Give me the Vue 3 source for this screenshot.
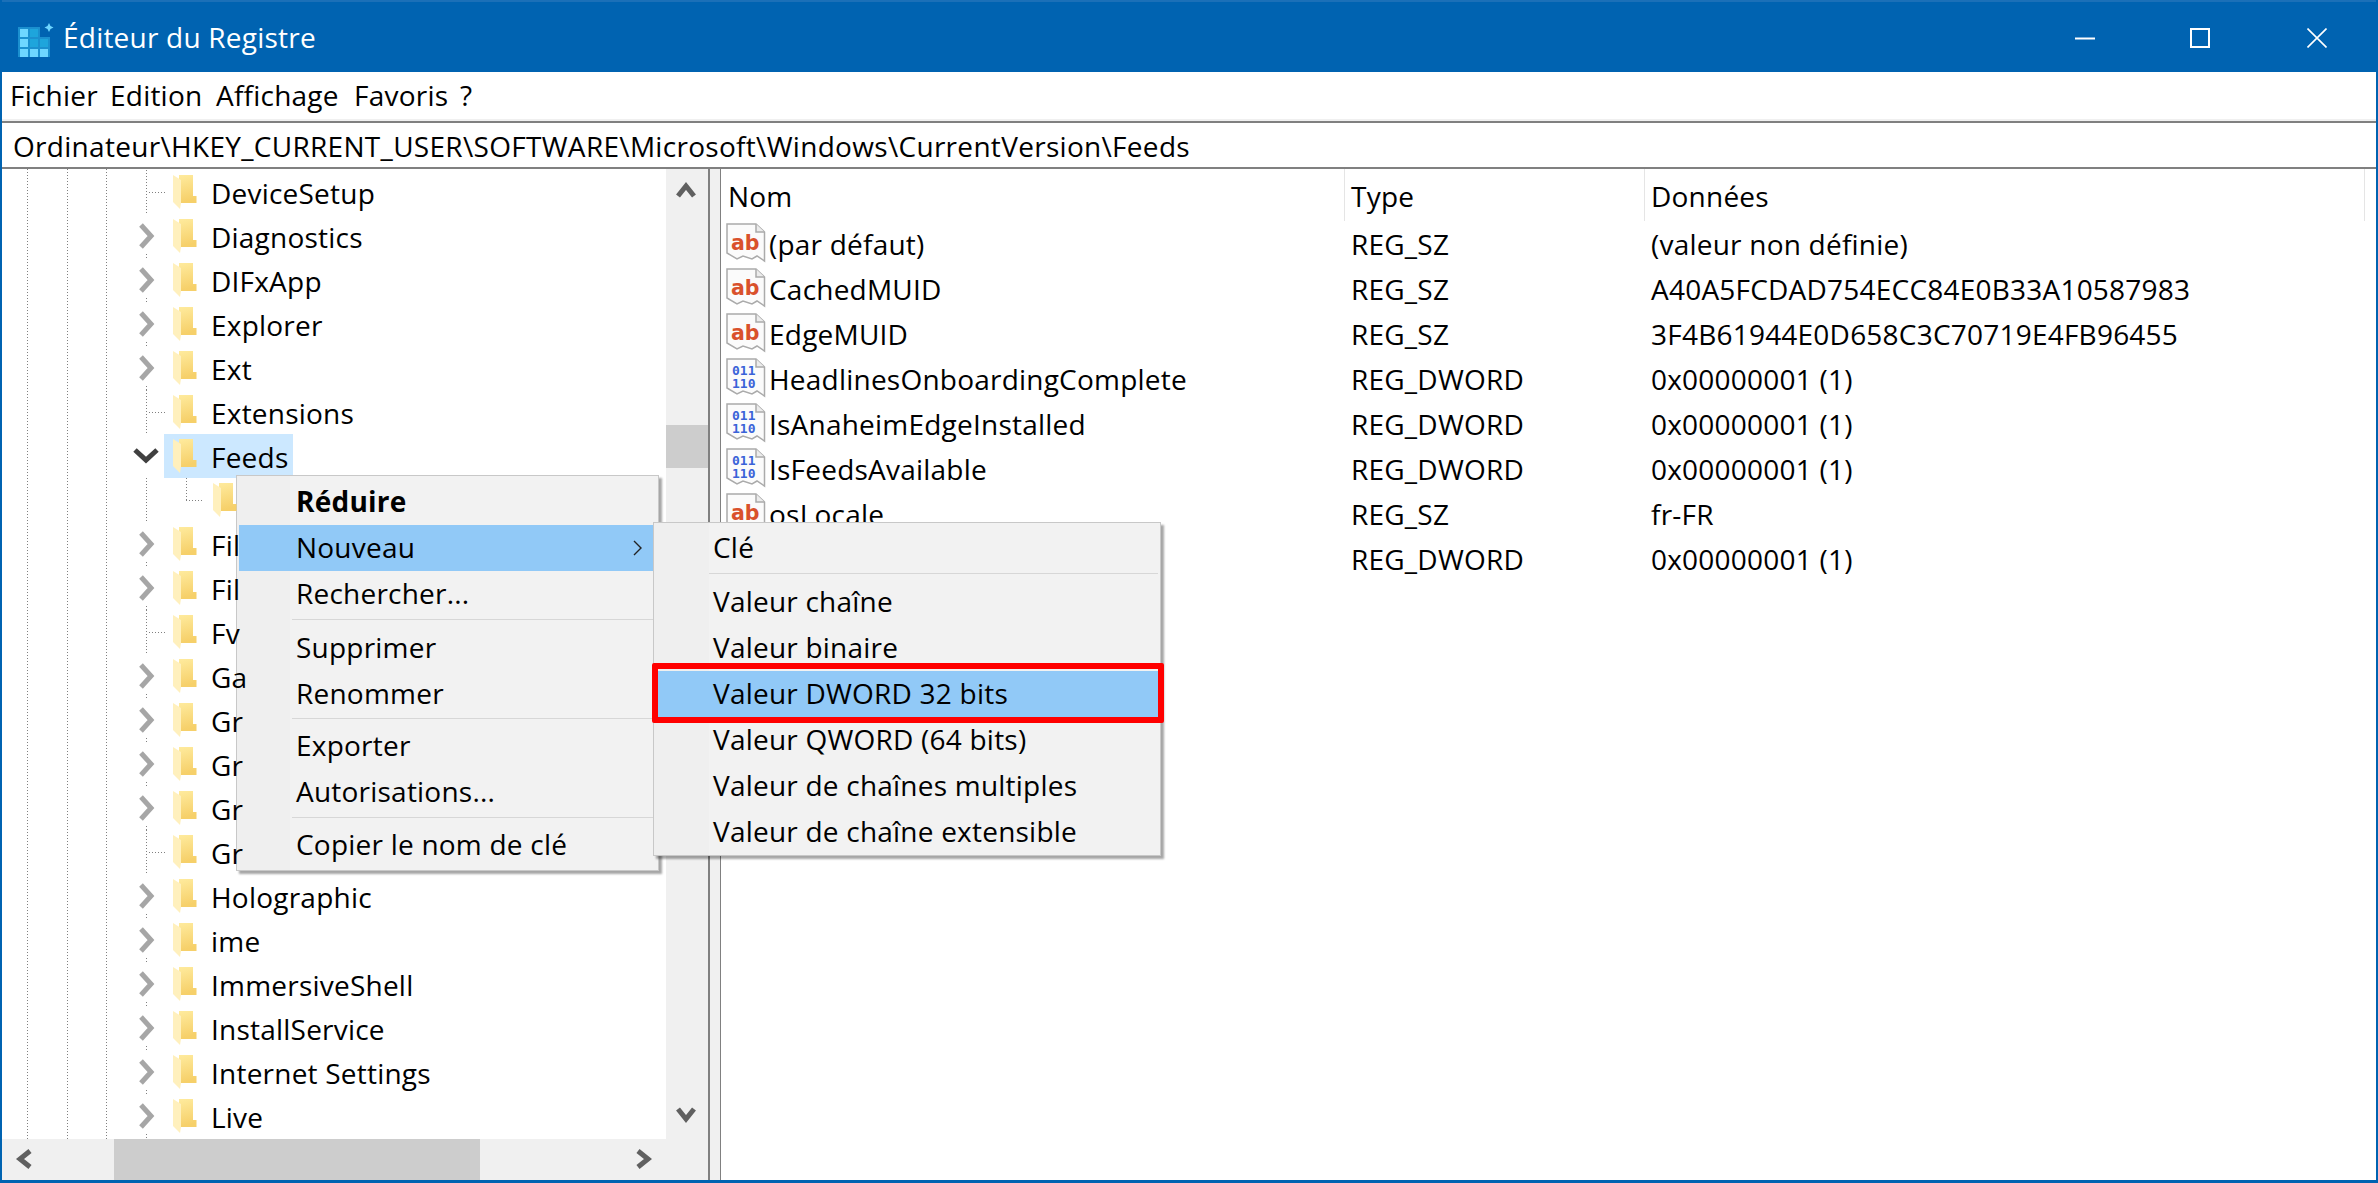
<script setup>
const tree = [
  { n: 'DeviceSetup', k: 'leaf' }, { n: 'Diagnostics', k: 'more' }, { n: 'DIFxApp', k: 'more' },
  { n: 'Explorer', k: 'more' }, { n: 'Ext', k: 'more' }, { n: 'Extensions', k: 'leaf' },
  { n: 'Feeds', k: 'open' }, { n: '', k: 'child' },
  { n: 'Fil', k: 'more' }, { n: 'Fil', k: 'more' }, { n: 'Fv', k: 'leaf' }, { n: 'Ga', k: 'more' },
  { n: 'Gr', k: 'more' }, { n: 'Gr', k: 'more' }, { n: 'Gr', k: 'more' }, { n: 'Gr', k: 'leaf' },
  { n: 'Holographic', k: 'more' }, { n: 'ime', k: 'more' }, { n: 'ImmersiveShell', k: 'more' },
  { n: 'InstallService', k: 'more' }, { n: 'Internet Settings', k: 'more' }, { n: 'Live', k: 'more' }
]
const values = [
  ['sz', '(par défaut)', 'REG_SZ', '(valeur non définie)'],
  ['sz', 'CachedMUID', 'REG_SZ', 'A40A5FCDAD754ECC84E0B33A10587983'],
  ['sz', 'EdgeMUID', 'REG_SZ', '3F4B61944E0D658C3C70719E4FB96455'],
  ['dw', 'HeadlinesOnboardingComplete', 'REG_DWORD', '0x00000001 (1)'],
  ['dw', 'IsAnaheimEdgeInstalled', 'REG_DWORD', '0x00000001 (1)'],
  ['dw', 'IsFeedsAvailable', 'REG_DWORD', '0x00000001 (1)'],
  ['sz', 'osLocale', 'REG_SZ', 'fr-FR'],
  ['', '', 'REG_DWORD', '0x00000001 (1)']
]
const ctx = [
  { t: 'Réduire', bold: true }, { t: 'Nouveau', hot: true, arrow: true }, { t: 'Rechercher...' }, { sep: 'a' },
  { t: 'Supprimer' }, { t: 'Renommer' }, { sep: 'b' }, { t: 'Exporter' }, { t: 'Autorisations...' }, { sep: 'c' },
  { t: 'Copier le nom de clé' }
]
const sub = [
  { t: 'Clé' }, { sep: 'a' }, { t: 'Valeur chaîne' }, { t: 'Valeur binaire' },
  { t: 'Valeur DWORD 32 bits', hot: true, mark: true }, { t: 'Valeur QWORD (64 bits)' },
  { t: 'Valeur de chaînes multiples' }, { t: 'Valeur de chaîne extensible' }
]
const squares = [[0,0],[1,0],[0,1],[1,1],[2,1],[0,2],[1,2],[2,2]]
</script>

<template>
  <div class="win">
    <header class="title">
      <svg class="appicon" width="34" height="34" viewBox="0 0 34 34">
        <rect x="0" y="4" width="22" height="11" fill="#1b90cf" />
        <rect x="0" y="14" width="32" height="20" fill="#1b90cf" />
        <rect v-for="s in squares" :key="s.join()" :x="2 + s[0] * 10" :y="6 + s[1] * 10" width="8" height="8"
              :fill="(s[0] === 1 && s[1] < 2) || (s[0] === 2 && s[1] === 1) ? '#1ea5dc' : '#6ed6ff'" />
        <path d="M31 0l1.5 3 3 1.5-3 1.5L31 9l-1.5-3-3-1.5 3-1.5z" fill="#6ed6ff" />
      </svg>
      <span class="title-text">Éditeur du Registre</span>
      <div class="controls">
        <svg width="20" height="20" viewBox="0 0 20 20" class="c1"><path d="M0 10.5h20" stroke="#fff" stroke-width="2" /></svg>
        <svg width="20" height="20" viewBox="0 0 20 20" class="c2"><rect x="1" y="1" width="18" height="18" fill="none" stroke="#fff" stroke-width="2" /></svg>
        <svg width="20" height="20" viewBox="0 0 20 20" class="c3"><path d="M.5.5l19 19M19.5.5l-19 19" stroke="#fff" stroke-width="1.6" /></svg>
      </div>
    </header>

    <nav class="menubar">
      <span>Fichier</span><span>Edition</span><span>Affichage</span><span>Favoris</span><span>?</span>
    </nav>

    <div class="address">Ordinateur\HKEY_CURRENT_USER\SOFTWARE\Microsoft\Windows\CurrentVersion\Feeds</div>

    <main class="body">
      <section class="treepane">
        <div class="treetop">
          <div class="tree">
            <div v-for="(r, i) in tree" :key="i" class="row" :class="r.k">
              <svg v-if="r.k === 'more'" class="chev" width="18" height="26" viewBox="0 0 18 26"><path d="M3 2l10 11L3 24" fill="none" stroke="#a6a6a6" stroke-width="5" /></svg>
              <svg v-else-if="r.k === 'open'" class="chev down" width="26" height="18" viewBox="0 0 26 18"><path d="M2 3l11 10L24 3" fill="none" stroke="#404040" stroke-width="5" /></svg>
              <span class="fold">
                <svg width="24" height="34" viewBox="0 0 24 34">
                  <defs>
                    <linearGradient id="fb" x1="0" y1="0" x2="0.2" y2="1"><stop offset="0" stop-color="#ffeca0" /><stop offset="1" stop-color="#f6d06a" /></linearGradient>
                  </defs>
                  <path d="M0 0H20V21H23.500V28H6V0Z" fill="url(#fb)" />
                  <path d="M0 0L8 5V28L7 34L0 27Z" fill="#fff0bd" />
                </svg>
              </span>
              <span class="name">{{ r.n }}</span>
            </div>
          </div>
          <div class="vscroll">
            <svg width="20" height="18" viewBox="0 0 20 18" class="up"><path d="M2 15L10 5l8 10" fill="none" stroke="#606060" stroke-width="5" /></svg>
            <div class="vthumb"></div>
            <svg width="20" height="18" viewBox="0 0 20 18" class="dn"><path d="M2 3l8 10 8-10" fill="none" stroke="#606060" stroke-width="5" /></svg>
          </div>
        </div>
        <div class="hscroll">
          <svg width="18" height="20" viewBox="0 0 18 20" class="lf"><path d="M15 2L5 10l10 8" fill="none" stroke="#606060" stroke-width="5" /></svg>
          <div class="hthumb"></div>
          <svg width="18" height="20" viewBox="0 0 18 20" class="rt"><path d="M3 2l10 8-10 8" fill="none" stroke="#606060" stroke-width="5" /></svg>
        </div>
      </section>

      <div class="splitter"></div>

      <section class="list">
        <div class="lhead">
          <span class="h1">Nom</span><span class="h2">Type</span><span class="h3">Données</span>
        </div>
        <div v-for="(v, i) in values" :key="i" class="lrow">
          <span class="cell">
            <svg v-if="v[0]" class="vicon" width="40" height="40" viewBox="0 0 40 40">
              <path d="M1 1H30L38.500 9V38L31 33L26 36L17 33L11 36L1 30Z" fill="#fbfbfb" stroke="#ababab" stroke-width="1.500" />
              <path d="M30 1V9H38.500" fill="#ececec" stroke="#ababab" stroke-width="1.500" />
              <text v-if="v[0] === 'sz'" x="5" y="27" class="ab">ab</text>
              <template v-else>
                <text x="6" y="17" class="bin">011</text>
                <text x="6" y="30" class="bin">110</text>
              </template>
            </svg>
            <span>{{ v[1] }}</span>
          </span>
          <span>{{ v[2] }}</span>
          <span>{{ v[3] }}</span>
        </div>
      </section>
    </main>

    <div class="menu ctx">
      <template v-for="(m, i) in ctx" :key="i">
        <div v-if="m.sep" class="sep" :class="m.sep"></div>
        <div v-else class="item" :class="{ hot: m.hot, bold: m.bold }">
          <span>{{ m.t }}</span>
          <svg v-if="m.arrow" class="arrow" width="10" height="16" viewBox="0 0 10 16"><path d="M1 1l7 7-7 7" fill="none" stroke="#222" stroke-width="1.400" /></svg>
        </div>
      </template>
    </div>

    <div class="menu subm">
      <template v-for="(m, i) in sub" :key="i">
        <div v-if="m.sep" class="sep" :class="m.sep"></div>
        <div v-else class="item" :class="{ hot: m.hot }">
          <span>{{ m.t }}</span>
          <i v-if="m.mark" class="mark"></i>
        </div>
      </template>
    </div>
  </div>
</template>

<style>
html, body { margin: 0; background: #fff; overflow: hidden; }
</style>

<style scoped>
.win {
  --dv: repeating-linear-gradient(#808080 0 1px, transparent 1px 3px);
  --dh: repeating-linear-gradient(90deg, #808080 0 1px, transparent 1px 3px);
  position: relative;
  width: 2378px;
  height: 1183px;
  box-sizing: border-box;
  display: flex;
  flex-direction: column;
  border-left: 2px solid #0063b1;
  border-right: 2px solid #0063b1;
  border-bottom: 3px solid #0063b1;
  background: #fff;
  color: #000;
  font-family: "Open Sans", "Noto Sans", sans-serif;
  font-size: 28px;
  letter-spacing: 0.22px;
  overflow: hidden;
}
.title {
  height: 72px;
  flex: none;
  margin: 0 -2px;
  background: #0063b1;
  border-top: 2px solid #1b70b8;
  box-sizing: border-box;
  display: flex;
  align-items: center;
  color: #fff;
  padding-left: 18px;
}
.appicon { margin-top: 6px; flex: none; overflow: visible; }
.title-text { margin-left: 11px; }
.controls { margin-left: auto; display: flex; align-items: center; margin-top: 1px; padding-right: 51px; }
.c2 { margin-left: 95px; }
.c3 { margin-left: 97px; }

.menubar {
  height: 47px;
  flex: none;
  display: flex;
  align-items: center;
  border-bottom: 2px solid #f0f0f0;
  padding-left: 8px;
  line-height: 53px;
}
.menubar span:nth-child(1) { width: 100px; }
.menubar span:nth-child(2) { width: 106px; }
.menubar span:nth-child(3) { width: 138px; }
.menubar span:nth-child(4) { width: 106px; }

.address {
  height: 48px;
  flex: none;
  box-sizing: border-box;
  border-top: 2px solid #808080;
  border-bottom: 2px solid #808080;
  padding-left: 11px;
  line-height: 46px;
  letter-spacing: 0.3px;
  white-space: nowrap;
}

.body { flex: 1; min-height: 0; display: flex; }

.treepane { width: 706px; flex: none; display: flex; flex-direction: column; }
.treetop { flex: 1; min-height: 0; display: flex; }
.tree {
  width: 664px;
  flex: none;
  padding-top: 1px;
  overflow: hidden;
  background-image: var(--dv), var(--dv), var(--dv);
  background-size: 1px 100%;
  background-position: 25px 0, 65px 0, 104px 0;
  background-repeat: no-repeat;
}
.row {
  position: relative;
  height: 44px;
  display: flex;
  align-items: center;
  background-repeat: no-repeat;
}
.row.leaf {
  background-image: var(--dv), var(--dh);
  background-size: 1px 100%, 18px 1px;
  background-position: 144px 0, 147px 22px;
}
.row.more {
  background-image: var(--dv);
  background-size: 1px 4px;
  background-position: 144px 100%;
}
.row.child {
  background-image: var(--dv), var(--dv), var(--dh);
  background-size: 1px 100%, 1px 22px, 18px 1px;
  background-position: 144px 0, 184px 0, 184px 22px;
}
.chev { position: absolute; left: 136px; top: 9px; }
.chev.down { left: 131px; top: 13px; }
.fold {
  position: absolute;
  left: 171px;
  top: 5px;
  height: 34px;
  width: 24px;
  z-index: 1;
}
.fold svg { display: block; }
.child .fold { left: 211px; }
.name { position: absolute; left: 209px; top: 0; line-height: 47px; z-index: 1; white-space: nowrap; }
.open::before {
  content: "";
  position: absolute;
  left: 162px;
  top: 0;
  width: 129px;
  height: 44px;
  background: #cce8ff;
}

.vscroll {
  width: 42px;
  flex: none;
  background: #f0f0f0;
  position: relative;
}
.vscroll svg { position: absolute; left: 10px; }
.up { top: 12px; }
.dn { top: 937px; }
.vthumb { position: absolute; left: 0; right: 0; top: 256px; height: 43px; background: #cdcdcd; }

.hscroll { height: 41px; flex: none; background: #f0f0f0; position: relative; }
.hscroll svg { position: absolute; top: 10px; }
.lf { left: 13px; }
.rt { left: 633px; }
.hthumb { position: absolute; left: 112px; width: 366px; top: 0; bottom: 0; background: #cdcdcd; }

.splitter {
  width: 13px;
  flex: none;
  box-sizing: border-box;
  background: #f0f0f0;
  border-left: 2px solid #808080;
  border-right: 1px solid #808080;
}

.list { flex: 1; min-width: 0; }
.lhead { height: 54px; position: relative; line-height: 55px; white-space: nowrap; }
.lhead span { position: absolute; top: 0; height: 52px; padding-left: 7px; box-sizing: border-box; }
.h1 { left: 0; width: 624px; border-right: 1px solid #e5e5e5; }
.h2 { left: 623px; width: 301px; border-right: 1px solid #e5e5e5; }
.h3 { left: 923px; width: 721px; border-right: 1px solid #e5e5e5; }
.lrow {
  height: 45px;
  display: grid;
  grid-template-columns: 630px 300px 1fr;
  align-items: start;
  white-space: nowrap;
  line-height: 43px;
}
.cell { display: flex; align-items: flex-start; gap: 3px; padding-left: 5px; min-height: 40px; }
.vicon { flex: none; }
.ab { font: 700 20.500px "DejaVu Sans", sans-serif; fill: #d9512c; letter-spacing: 0; }
.bin { font: 700 13px "DejaVu Sans Mono", monospace; fill: #3a63d8; letter-spacing: 0; }

.menu {
  position: absolute;
  box-sizing: border-box;
  background: #f2f2f2;
  border: 1px solid #c8c8c8;
  box-shadow: 3px 3px 2px rgba(0, 0, 0, 0.35);
  white-space: nowrap;
}
.ctx { left: 234px; top: 475px; width: 423px; height: 396px; padding: 3px 5px 0 2px; }
.subm { left: 651px; top: 522px; width: 508px; height: 334px; padding: 2px 2px 0 0; z-index: 2; }
.ctx { background: linear-gradient(90deg, #efefef 53px, #f2f2f2 53px); }
.subm { background: linear-gradient(90deg, #efefef 55px, #f2f2f2 55px); }
.item { position: relative; height: 46px; line-height: 45px; }
.ctx .item { padding-left: 57px; }
.subm .item { padding-left: 59px; }
.item.hot { background: #91c9f7; }
.item.bold { font-weight: 700; }
.sep { background: linear-gradient(#d7d7d7, #d7d7d7) 0 2px / 100% 1px no-repeat; }
.sep.a { height: 8px; }
.sep.b { height: 6px; background-position: 0 1px; }
.sep.c { height: 7px; }
.ctx .sep { margin-left: 53px; }
.subm .sep { margin-left: 55px; }
.arrow { position: absolute; left: 394px; top: 15px; }
.mark {
  position: absolute;
  left: -2px;
  right: -6px;
  top: -8px;
  bottom: -6px;
  border: 6px solid #f00;
  border-radius: 2px;
}
</style>
